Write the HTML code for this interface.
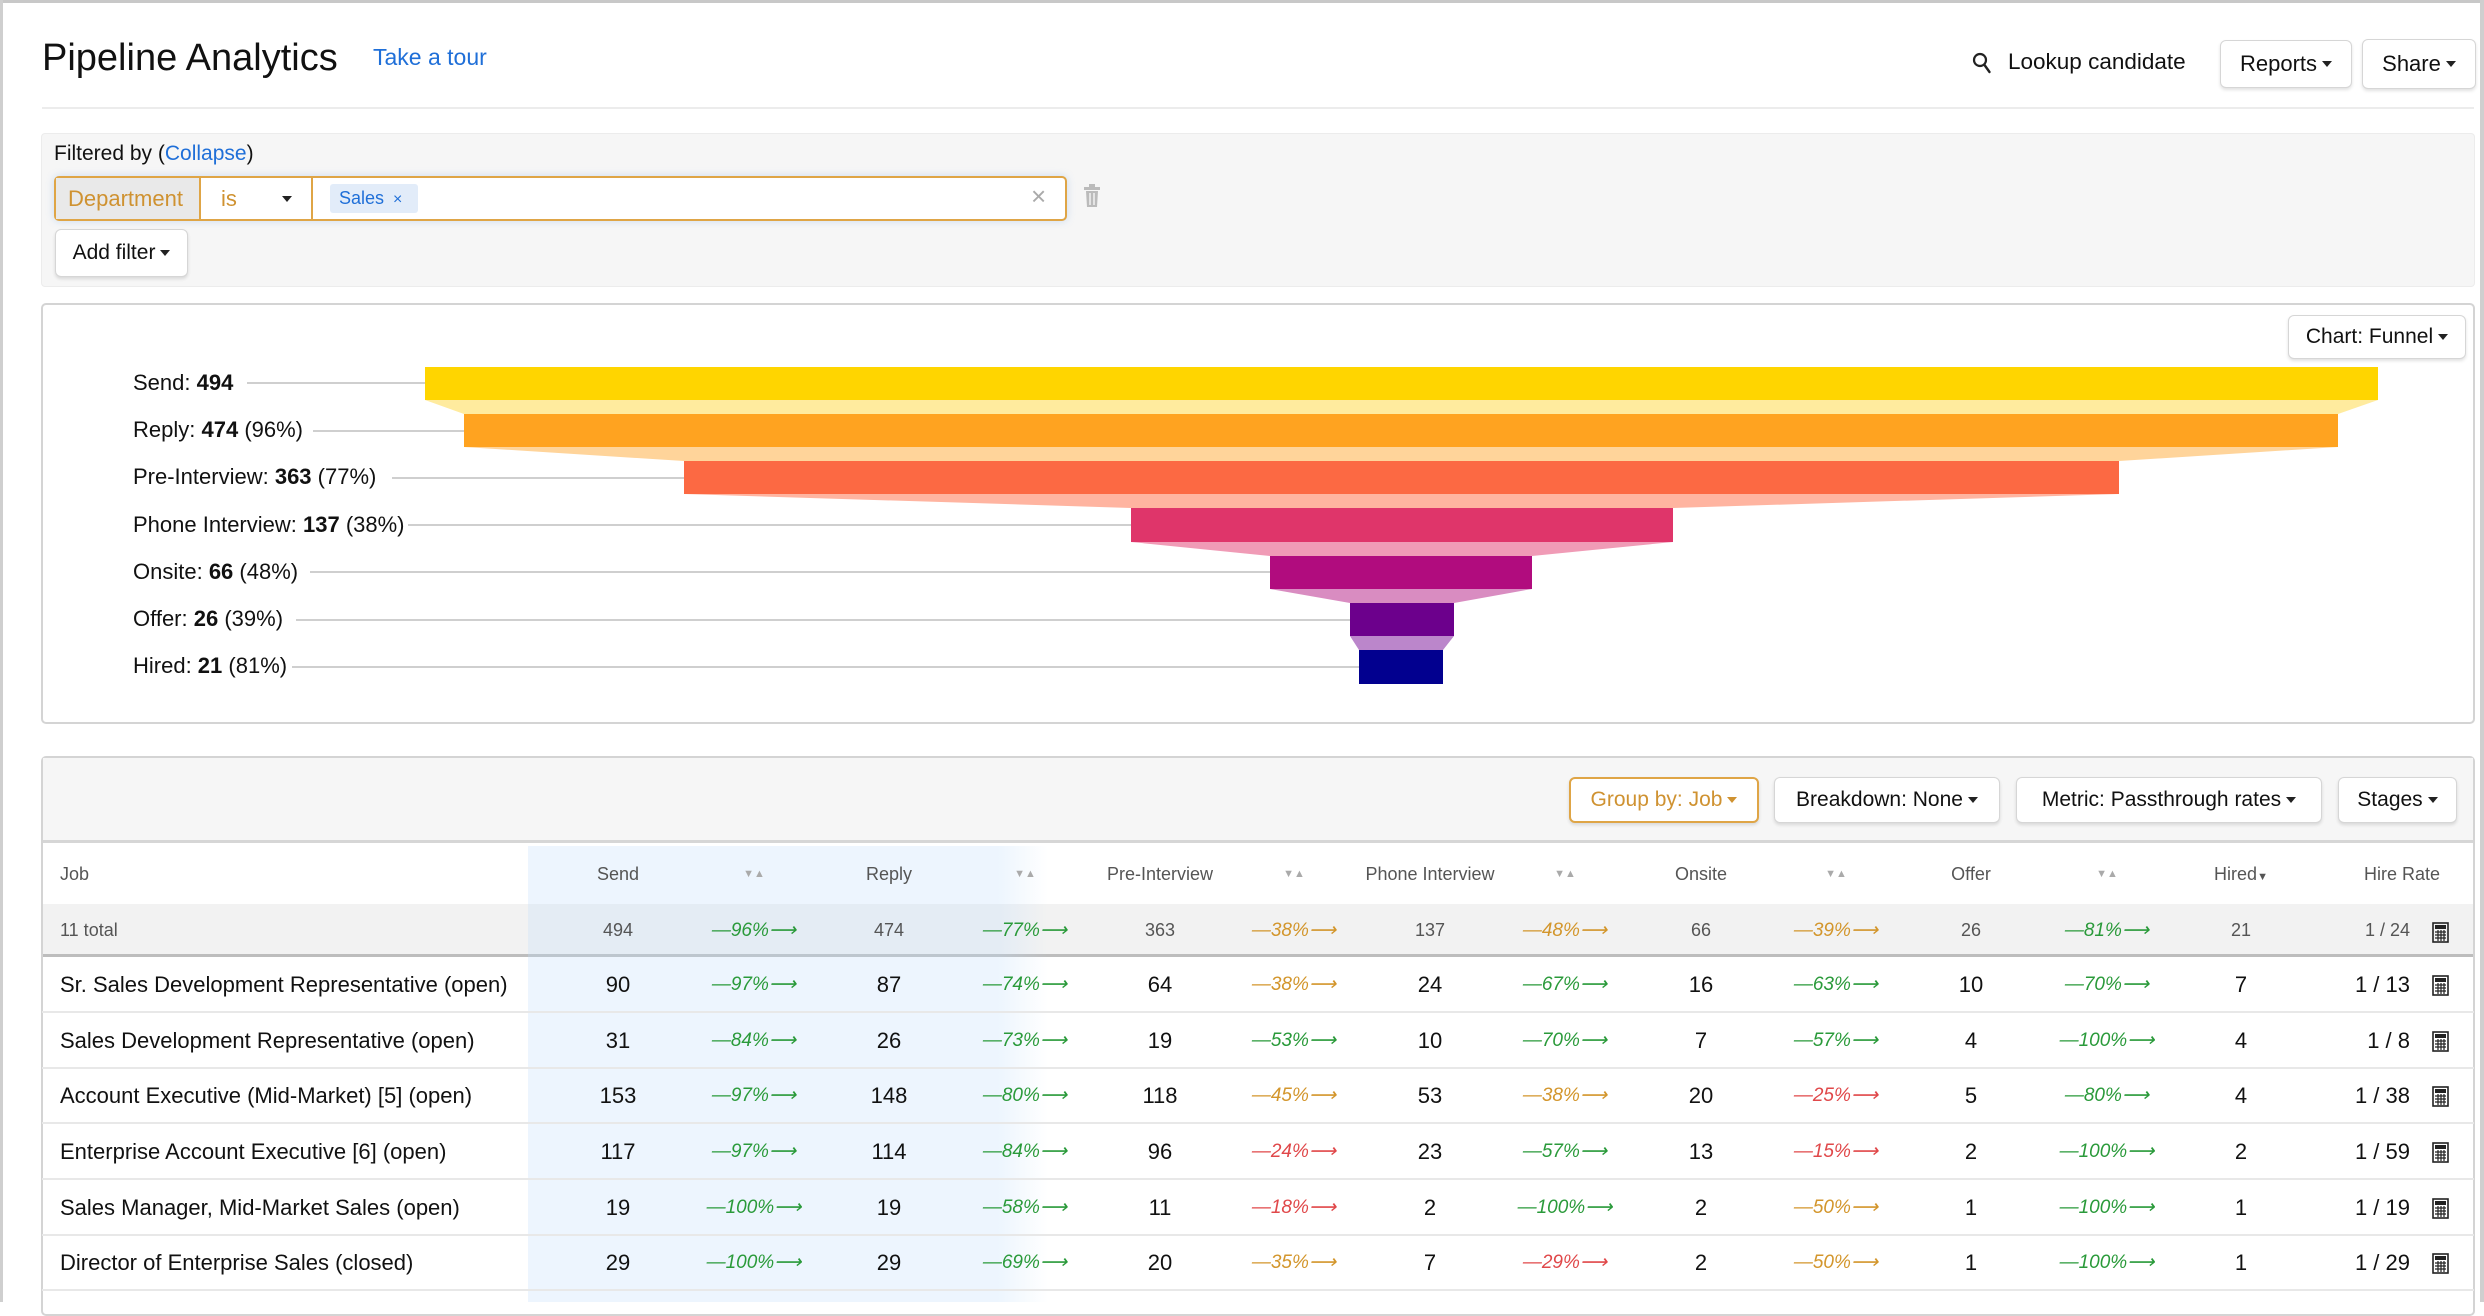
<!DOCTYPE html>
<html><head><meta charset="utf-8"><style>
*{box-sizing:border-box;margin:0;padding:0}
body{width:2484px;height:1302px;position:relative;overflow:hidden;background:#fff;font-family:"Liberation Sans",Arial,sans-serif;color:#111}
.a{position:absolute}
.btn{position:absolute;background:#fff;border:1.5px solid #d6d6d6;border-radius:6px;box-shadow:0 2px 3px rgba(0,0,0,.12);font-size:22px;display:flex;align-items:center;justify-content:center;color:#111}
.car{display:inline-block;width:0;height:0;border-left:5px solid transparent;border-right:5px solid transparent;border-top:6px solid #222;margin-left:5px;vertical-align:middle}
.row{position:absolute;left:42px;width:2432px;height:56px;line-height:56px;border-bottom:2px solid #e8e8e8}
.c{position:absolute;width:200px;text-align:center;font-size:22px;top:0}
.p{position:absolute;width:200px;text-align:center;font-size:19px;font-style:italic;top:0}
.g{color:#2a9a3a}.o{color:#d3962c}.r{color:#e0484a}
.job{position:absolute;left:18px;font-size:22px}
.hr{position:absolute;right:64px;font-size:22px;text-align:right}
.calc{position:absolute;right:25px;top:18px;width:17px;height:21px}
</style></head><body>
<div class="a" style="left:0;top:0;width:2484px;height:3px;background:#c8c8c8"></div>
<div class="a" style="left:0;top:0;width:3px;height:1302px;background:#cfcfcf"></div>
<div class="a" style="left:2480px;top:0;width:4px;height:1302px;background:#cfcfcf"></div>

<div class="a" style="left:42px;top:37px;font-size:38px;color:#111">Pipeline Analytics</div>
<div class="a" style="left:373px;top:44px;font-size:23px;color:#1f6fd8">Take a tour</div>

<svg class="a" style="left:1972px;top:52px" width="20" height="22" viewBox="0 0 20 22"><circle cx="8" cy="8" r="6" fill="none" stroke="#222" stroke-width="2.2"/><path d="M12.5 13 L17.5 20" stroke="#222" stroke-width="2.4" stroke-linecap="round"/></svg>
<div class="a" style="left:2008px;top:49px;font-size:22.5px">Lookup candidate</div>
<div class="btn" style="left:2220px;top:40px;width:132px;height:48px">Reports<span class="car"></span></div>
<div class="btn" style="left:2362px;top:39px;width:114px;height:50px">Share<span class="car"></span></div>

<div class="a" style="left:42px;top:107px;width:2432px;height:2px;background:#ececec"></div>

<div class="a" style="left:41px;top:133px;width:2434px;height:154px;background:#f6f6f6;border:1.5px solid #ececec;border-radius:4px"></div>
<div class="a" style="left:54px;top:142px;font-size:21px">Filtered by (<span style="color:#1f6fd8">Collapse</span>)</div>
<div class="a" style="left:54px;top:176px;width:1013px;height:45px;border:2px solid #dfa546;border-radius:5px;background:#fff;box-shadow:0 0 8px rgba(120,170,230,.35)"></div>
<div class="a" style="left:56px;top:178px;width:145px;height:41px;background:#e9e9e9;border-right:2px solid #dfa546;color:#cf9231;font-size:22px;line-height:41px;padding-left:12px">Department</div>
<div class="a" style="left:201px;top:178px;width:112px;height:41px;border-right:2px solid #dfa546;color:#cf9231;font-size:22px;line-height:41px;padding-left:20px">is<span class="car" style="position:absolute;left:81px;top:18px;margin:0"></span></div>
<div class="a" style="left:330px;top:184px;width:88px;height:29px;background:#e2ecf9;border-radius:3px;color:#1f6fd8;font-size:18px;line-height:29px;padding-left:9px">Sales <span style="font-size:16px;margin-left:4px">×</span></div>
<div class="a" style="left:1031px;top:181px;font-size:26px;color:#aaa">×</div>
<svg class="a" style="left:1083px;top:184px" width="18" height="24" viewBox="0 0 18 24"><rect x="1" y="3" width="16" height="3" fill="#bbb"/><rect x="6" y="0" width="6" height="3" fill="#bbb"/><path d="M3 7 H15 L14 23 H4 Z" fill="#bbb"/><path d="M7 9 V21 M11 9 V21" stroke="#fff" stroke-width="1.2"/></svg>
<div class="btn" style="left:55px;top:229px;width:133px;height:48px;font-size:21px">Add filter<span class="car"></span></div>

<div class="a" style="left:41px;top:303px;width:2434px;height:421px;border:2px solid #d4d4d4;border-radius:5px"></div>
<div class="btn" style="left:2288px;top:315px;width:178px;height:44px;font-size:21px">Chart: Funnel<span class="car"></span></div>
<svg class="a" style="left:0;top:0" width="2484" height="760">
<g stroke="#cfcfcf" stroke-width="2">
<line x1="247" y1="383" x2="425" y2="383"/>
<line x1="313" y1="431" x2="464" y2="431"/>
<line x1="392" y1="478" x2="684" y2="478"/>
<line x1="408" y1="525" x2="1131" y2="525"/>
<line x1="310" y1="572" x2="1270" y2="572"/>
<line x1="296" y1="620" x2="1350" y2="620"/>
<line x1="292" y1="667" x2="1359" y2="667"/>
</g>
<polygon points="425,400 2378,400 2338,414 464,414" fill="#ffeb9e"/>
<polygon points="464,447 2338,447 2119,461 684,461" fill="#ffd49a"/>
<polygon points="684,494 2119,494 1673,508 1131,508" fill="#ffb4a0"/>
<polygon points="1131,542 1673,542 1532,556 1270,556" fill="#f09bb6"/>
<polygon points="1270,589 1532,589 1454,603 1350,603" fill="#d98cc1"/>
<polygon points="1350,636 1454,636 1443,650 1359,650" fill="#bb86cb"/>
<rect x="425" y="367" width="1953" height="33" fill="#ffd500"/>
<rect x="464" y="414" width="1874" height="33" fill="#ffa320"/>
<rect x="684" y="461" width="1435" height="33" fill="#fc6943"/>
<rect x="1131" y="508" width="542" height="34" fill="#df356a"/>
<rect x="1270" y="556" width="262" height="33" fill="#b10c7e"/>
<rect x="1350" y="603" width="104" height="33" fill="#6c008c"/>
<rect x="1359" y="650" width="84" height="34" fill="#02008f"/>
<g font-family="Liberation Sans, Arial, sans-serif" font-size="22" fill="#111">
<text x="133" y="390">Send: <tspan font-weight="bold">494</tspan></text>
<text x="133" y="437">Reply: <tspan font-weight="bold">474</tspan> (96%)</text>
<text x="133" y="484">Pre-Interview: <tspan font-weight="bold">363</tspan> (77%)</text>
<text x="133" y="532">Phone Interview: <tspan font-weight="bold">137</tspan> (38%)</text>
<text x="133" y="579">Onsite: <tspan font-weight="bold">66</tspan> (48%)</text>
<text x="133" y="626">Offer: <tspan font-weight="bold">26</tspan> (39%)</text>
<text x="133" y="673">Hired: <tspan font-weight="bold">21</tspan> (81%)</text>
</g>
</svg>

<div class="a" style="left:41px;top:756px;width:2434px;height:560px;border:2px solid #d4d4d4;border-radius:5px;background:#fff"></div>
<div class="a" style="left:43px;top:758px;width:2430px;height:85px;background:#f6f6f6;border-bottom:3px solid #d6d6d6"></div>
<div class="btn" style="left:1569px;top:777px;width:190px;height:46px;border:2px solid #dfa546;color:#cf9231;font-size:21px">Group by: Job<span class="car" style="border-top-color:#cf9231"></span></div>
<div class="btn" style="left:1774px;top:777px;width:226px;height:46px;font-size:21px">Breakdown: None<span class="car"></span></div>
<div class="btn" style="left:2016px;top:777px;width:306px;height:46px;font-size:21px">Metric: Passthrough rates<span class="car"></span></div>
<div class="btn" style="left:2338px;top:777px;width:119px;height:46px;font-size:21px">Stages<span class="car"></span></div>

<!-- total row bg + column highlight (behind text) -->
<div class="a" style="left:43px;top:904px;width:2430px;height:53px;background:#f2f2f2;border-bottom:3px solid #bdbdbd"></div>
<div class="a" style="left:528px;top:846px;width:520px;height:456px;background:linear-gradient(to right,rgba(190,220,250,.28) 0,rgba(190,220,250,.28) 470px,rgba(190,220,250,0) 520px)"></div>

<div class="row" style="top:845px;height:59px;line-height:59px;border-bottom:none;color:#555">
<div class="job" style="font-size:18px">Job</div>
<div class="c" style="left:476px;font-size:18px">Send</div><div class="c" style="left:612px;font-size:11px;color:#aaa">▼▲</div>
<div class="c" style="left:747px;font-size:18px">Reply</div><div class="c" style="left:883px;font-size:11px;color:#aaa">▼▲</div>
<div class="c" style="left:1018px;font-size:18px">Pre-Interview</div><div class="c" style="left:1152px;font-size:11px;color:#aaa">▼▲</div>
<div class="c" style="left:1288px;font-size:18px">Phone Interview</div><div class="c" style="left:1423px;font-size:11px;color:#aaa">▼▲</div>
<div class="c" style="left:1559px;font-size:18px">Onsite</div><div class="c" style="left:1694px;font-size:11px;color:#aaa">▼▲</div>
<div class="c" style="left:1829px;font-size:18px">Offer</div><div class="c" style="left:1965px;font-size:11px;color:#aaa">▼▲</div>
<div class="c" style="left:2099px;font-size:18px">Hired<span style="font-size:11px">▼</span></div>
<div class="hr" style="font-size:18px;right:34px">Hire Rate</div>
</div>

<div class="row" style="top:904px;height:53px;line-height:53px;border-bottom:none;color:#555">
<div class="job" style="font-size:18px">11 total</div>
<div class="c" style="left:476px;font-size:18px">494</div><div class="p g" style="left:612px">—96%⟶</div>
<div class="c" style="left:747px;font-size:18px">474</div><div class="p g" style="left:883px">—77%⟶</div>
<div class="c" style="left:1018px;font-size:18px">363</div><div class="p o" style="left:1152px">—38%⟶</div>
<div class="c" style="left:1288px;font-size:18px">137</div><div class="p o" style="left:1423px">—48%⟶</div>
<div class="c" style="left:1559px;font-size:18px">66</div><div class="p o" style="left:1694px">—39%⟶</div>
<div class="c" style="left:1829px;font-size:18px">26</div><div class="p g" style="left:1965px">—81%⟶</div>
<div class="c" style="left:2099px;font-size:18px">21</div>
<div class="hr" style="font-size:18px">1 / 24</div>
<svg class="calc" viewBox="0 0 17 21"><rect x="1" y="1" width="15" height="19" fill="none" stroke="#222" stroke-width="1.6"/><rect x="3" y="3" width="11" height="4" fill="#222"/><path d="M3 10H14M3 13H14M3 16H14M6 8V19M9 8V19M12 8V19" stroke="#222" stroke-width="1.2"/></svg>
</div>

<div class="row" style="top:957px"><div class="job">Sr. Sales Development Representative (open)</div>
<div class="c" style="left:476px">90</div><div class="p g" style="left:612px">—97%⟶</div>
<div class="c" style="left:747px">87</div><div class="p g" style="left:883px">—74%⟶</div>
<div class="c" style="left:1018px">64</div><div class="p o" style="left:1152px">—38%⟶</div>
<div class="c" style="left:1288px">24</div><div class="p g" style="left:1423px">—67%⟶</div>
<div class="c" style="left:1559px">16</div><div class="p g" style="left:1694px">—63%⟶</div>
<div class="c" style="left:1829px">10</div><div class="p g" style="left:1965px">—70%⟶</div>
<div class="c" style="left:2099px">7</div><div class="hr">1 / 13</div>
<svg class="calc" viewBox="0 0 17 21"><rect x="1" y="1" width="15" height="19" fill="none" stroke="#222" stroke-width="1.6"/><rect x="3" y="3" width="11" height="4" fill="#222"/><path d="M3 10H14M3 13H14M3 16H14M6 8V19M9 8V19M12 8V19" stroke="#222" stroke-width="1.2"/></svg></div>

<div class="row" style="top:1013px"><div class="job">Sales Development Representative (open)</div>
<div class="c" style="left:476px">31</div><div class="p g" style="left:612px">—84%⟶</div>
<div class="c" style="left:747px">26</div><div class="p g" style="left:883px">—73%⟶</div>
<div class="c" style="left:1018px">19</div><div class="p g" style="left:1152px">—53%⟶</div>
<div class="c" style="left:1288px">10</div><div class="p g" style="left:1423px">—70%⟶</div>
<div class="c" style="left:1559px">7</div><div class="p g" style="left:1694px">—57%⟶</div>
<div class="c" style="left:1829px">4</div><div class="p g" style="left:1965px">—100%⟶</div>
<div class="c" style="left:2099px">4</div><div class="hr">1 / 8</div>
<svg class="calc" viewBox="0 0 17 21"><rect x="1" y="1" width="15" height="19" fill="none" stroke="#222" stroke-width="1.6"/><rect x="3" y="3" width="11" height="4" fill="#222"/><path d="M3 10H14M3 13H14M3 16H14M6 8V19M9 8V19M12 8V19" stroke="#222" stroke-width="1.2"/></svg></div>

<div class="row" style="top:1068px"><div class="job">Account Executive (Mid-Market) [5] (open)</div>
<div class="c" style="left:476px">153</div><div class="p g" style="left:612px">—97%⟶</div>
<div class="c" style="left:747px">148</div><div class="p g" style="left:883px">—80%⟶</div>
<div class="c" style="left:1018px">118</div><div class="p o" style="left:1152px">—45%⟶</div>
<div class="c" style="left:1288px">53</div><div class="p o" style="left:1423px">—38%⟶</div>
<div class="c" style="left:1559px">20</div><div class="p r" style="left:1694px">—25%⟶</div>
<div class="c" style="left:1829px">5</div><div class="p g" style="left:1965px">—80%⟶</div>
<div class="c" style="left:2099px">4</div><div class="hr">1 / 38</div>
<svg class="calc" viewBox="0 0 17 21"><rect x="1" y="1" width="15" height="19" fill="none" stroke="#222" stroke-width="1.6"/><rect x="3" y="3" width="11" height="4" fill="#222"/><path d="M3 10H14M3 13H14M3 16H14M6 8V19M9 8V19M12 8V19" stroke="#222" stroke-width="1.2"/></svg></div>

<div class="row" style="top:1124px"><div class="job">Enterprise Account Executive [6] (open)</div>
<div class="c" style="left:476px">117</div><div class="p g" style="left:612px">—97%⟶</div>
<div class="c" style="left:747px">114</div><div class="p g" style="left:883px">—84%⟶</div>
<div class="c" style="left:1018px">96</div><div class="p r" style="left:1152px">—24%⟶</div>
<div class="c" style="left:1288px">23</div><div class="p g" style="left:1423px">—57%⟶</div>
<div class="c" style="left:1559px">13</div><div class="p r" style="left:1694px">—15%⟶</div>
<div class="c" style="left:1829px">2</div><div class="p g" style="left:1965px">—100%⟶</div>
<div class="c" style="left:2099px">2</div><div class="hr">1 / 59</div>
<svg class="calc" viewBox="0 0 17 21"><rect x="1" y="1" width="15" height="19" fill="none" stroke="#222" stroke-width="1.6"/><rect x="3" y="3" width="11" height="4" fill="#222"/><path d="M3 10H14M3 13H14M3 16H14M6 8V19M9 8V19M12 8V19" stroke="#222" stroke-width="1.2"/></svg></div>

<div class="row" style="top:1180px"><div class="job">Sales Manager, Mid-Market Sales (open)</div>
<div class="c" style="left:476px">19</div><div class="p g" style="left:612px">—100%⟶</div>
<div class="c" style="left:747px">19</div><div class="p g" style="left:883px">—58%⟶</div>
<div class="c" style="left:1018px">11</div><div class="p r" style="left:1152px">—18%⟶</div>
<div class="c" style="left:1288px">2</div><div class="p g" style="left:1423px">—100%⟶</div>
<div class="c" style="left:1559px">2</div><div class="p o" style="left:1694px">—50%⟶</div>
<div class="c" style="left:1829px">1</div><div class="p g" style="left:1965px">—100%⟶</div>
<div class="c" style="left:2099px">1</div><div class="hr">1 / 19</div>
<svg class="calc" viewBox="0 0 17 21"><rect x="1" y="1" width="15" height="19" fill="none" stroke="#222" stroke-width="1.6"/><rect x="3" y="3" width="11" height="4" fill="#222"/><path d="M3 10H14M3 13H14M3 16H14M6 8V19M9 8V19M12 8V19" stroke="#222" stroke-width="1.2"/></svg></div>

<div class="row" style="top:1235px"><div class="job">Director of Enterprise Sales (closed)</div>
<div class="c" style="left:476px">29</div><div class="p g" style="left:612px">—100%⟶</div>
<div class="c" style="left:747px">29</div><div class="p g" style="left:883px">—69%⟶</div>
<div class="c" style="left:1018px">20</div><div class="p o" style="left:1152px">—35%⟶</div>
<div class="c" style="left:1288px">7</div><div class="p r" style="left:1423px">—29%⟶</div>
<div class="c" style="left:1559px">2</div><div class="p o" style="left:1694px">—50%⟶</div>
<div class="c" style="left:1829px">1</div><div class="p g" style="left:1965px">—100%⟶</div>
<div class="c" style="left:2099px">1</div><div class="hr">1 / 29</div>
<svg class="calc" viewBox="0 0 17 21"><rect x="1" y="1" width="15" height="19" fill="none" stroke="#222" stroke-width="1.6"/><rect x="3" y="3" width="11" height="4" fill="#222"/><path d="M3 10H14M3 13H14M3 16H14M6 8V19M9 8V19M12 8V19" stroke="#222" stroke-width="1.2"/></svg></div>
</body></html>
